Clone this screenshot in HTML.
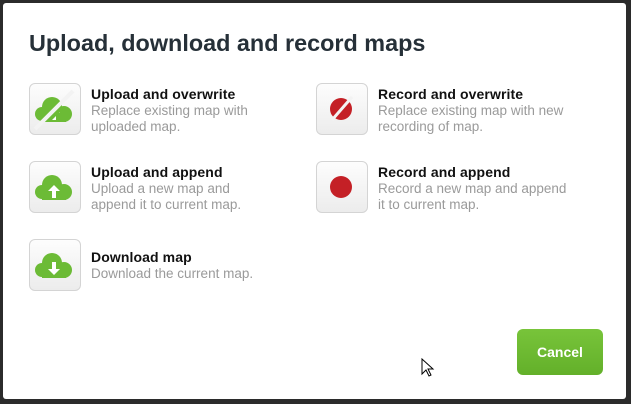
<!DOCTYPE html>
<html><head><style>
*{margin:0;padding:0;box-sizing:border-box}
body{width:631px;height:404px;background:#2b2b2b;font-family:"Liberation Sans",sans-serif;position:relative;overflow:hidden}
.dlg{position:absolute;left:3px;top:3px;width:623px;height:396px;background:#fff;border-radius:3px}
h1{position:absolute;left:29px;top:30px;font-size:23.4px;font-weight:bold;color:#263038;white-space:nowrap}
.box{position:absolute;width:52px;height:52px;border:1px solid #d4d4d4;border-radius:6px;background:linear-gradient(#fdfdfd,#ececec)}
.box svg{position:absolute;left:-1px;top:-1px}
.t{position:absolute;font-size:14px;font-weight:bold;color:#111;letter-spacing:0.1px;white-space:nowrap}
.d{position:absolute;font-size:13.5px;color:#9a9a9a;line-height:16px;white-space:nowrap}
.btn{position:absolute;left:517px;top:329px;width:86px;height:46px;border-radius:6px;background:linear-gradient(#78c43a,#63b02a);color:#fff;font-weight:bold;font-size:14px;text-align:center;line-height:46px}
</style></head><body>
<div class="dlg"></div>
<h1>Upload, download and record maps</h1>

<div class="box" style="left:29px;top:83px"><svg width="52" height="52"><defs><clipPath id="c2"><path d="M0 60L52 8V60z"/></clipPath></defs>
<g fill="#6cbb36"><circle cx="13" cy="31" r="7"/><circle cx="23" cy="24" r="10"/><circle cx="35" cy="31" r="8"/><rect x="13" y="28" width="24" height="11"/></g>
<path d="M6 46L44 8" stroke="#f3f3f3" stroke-width="4"/>
<path d="M19 30L25 24L31 30H27V37H23V30Z" fill="#fff" clip-path="url(#c2)"/></svg></div>
<div class="t" style="left:91px;top:86px">Upload and overwrite</div>
<div class="d" style="left:91px;top:103px">Replace existing map with<br>uploaded map.</div>

<div class="box" style="left:29px;top:161px"><svg width="52" height="52"><g fill="#6cbb36"><circle cx="13" cy="31" r="7"/><circle cx="23" cy="24" r="10"/><circle cx="35" cy="31" r="8"/><rect x="13" y="28" width="24" height="11"/></g>
<path d="M19 30L25 24L31 30H27V37H23V30Z" fill="#fff"/></svg></div>
<div class="t" style="left:91px;top:164px">Upload and append</div>
<div class="d" style="left:91px;top:181px">Upload a new map and<br>append it to current map.</div>

<div class="box" style="left:29px;top:239px"><svg width="52" height="52"><g fill="#6cbb36"><circle cx="13" cy="31" r="7"/><circle cx="23" cy="24" r="10"/><circle cx="35" cy="31" r="8"/><rect x="13" y="28" width="24" height="11"/></g>
<path d="M19 30L25 36L31 30H27V23H23V30Z" fill="#fff"/></svg></div>
<div class="t" style="left:91px;top:249px">Download map</div>
<div class="d" style="left:91px;top:266px">Download the current map.</div>

<div class="box" style="left:316px;top:83px"><svg width="52" height="52"><circle cx="25" cy="26" r="11" fill="#c42026"/><path d="M16 37L36 14" stroke="#f3f3f3" stroke-width="3"/></svg></div>
<div class="t" style="left:378px;top:86px">Record and overwrite</div>
<div class="d" style="left:378px;top:103px">Replace existing map with new<br>recording of map.</div>

<div class="box" style="left:316px;top:161px"><svg width="52" height="52"><circle cx="25" cy="26" r="11" fill="#c42026"/></svg></div>
<div class="t" style="left:378px;top:164px">Record and append</div>
<div class="d" style="left:378px;top:181px">Record a new map and append<br>it to current map.</div>

<div class="btn">Cancel</div>
<svg style="position:absolute;left:421px;top:358px" width="14" height="20"><path d="M1 1V16L5 12L8 18L10 17L7 11H12Z" fill="#fff" stroke="#000" stroke-width="1"/></svg>
</body></html>
